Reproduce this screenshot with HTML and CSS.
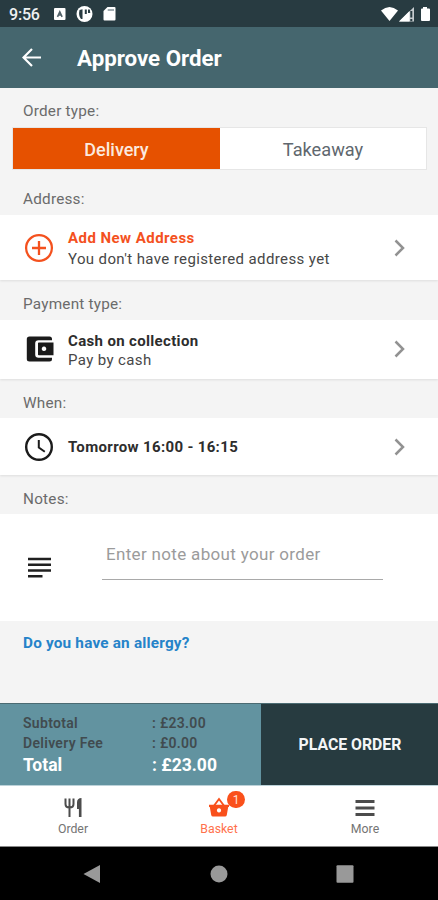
FILE: index.html
```html
<!DOCTYPE html>
<html lang="en">
<head>
<meta charset="utf-8">
<title>Approve Order</title>
<link rel="stylesheet" href="styles.css">
</head>
<body>
<div class="phone">
  <div class="status">
    <span class="clock">9:56</span>
    <svg class="status-left" width="64" height="16" viewBox="0 0 64 16">
      <rect x="0" y="2" width="11.500" height="12" rx="1" fill="#fff"/>
      <path d="M3.500 10.800l2.300-5 2.300 5M4.400 9h2.800" fill="none" stroke="#526269" stroke-width="1.600"/>
      <circle cx="30.500" cy="8" r="8" fill="#fff"/>
      <path d="M25.500 4l3-.8v9.800h-1.500q-2.800-3-1.500-9zM30.800 3.500h2v4.500h-2zM34 3.500h1.800l.5 3.500H34z" fill="#283b41"/>
      <path d="M53.500 1h7q1 0 1 1v11.500q0 1-1 1h-10q-1 0-1-1V5z" fill="#fff"/>
      <path d="M53.700 4H60" stroke="#8c999f" stroke-width="1.600"/>
    </svg>
    <svg class="status-right" width="50" height="16" viewBox="0 0 50 16">
      <path d="M0 4.500q8.500-7 17 0L8.500 15z" fill="#fff"/>
      <path d="M18 15.500L33 1v14.500z" fill="#c5cbce"/>
      <path d="M18 15.500L28.500 5v10.500z" fill="#fff"/>
      <path d="M30.300 5v6.500M30.300 13v2" stroke="#283b41" stroke-width="2"/>
      <path d="M42 1h4v1.500h2q1 0 1 1V14q0 1-1 1h-7q-1 0-1-1V3.500q0-1 1-1h1z" fill="#fff"/>
    </svg>
  </div>
  <header class="appbar">
    <svg width="20" height="20" viewBox="0 0 20 20"><path d="M10 1L1.500 9.500 10 18M1.500 9.500H19" fill="none" stroke="#fff" stroke-width="2.200"/></svg>
    <h1>Approve Order</h1>
  </header>
  <main>
    <div class="label label-type">Order type:</div>
    <div class="tabs">
      <div class="tab active">Delivery</div>
      <div class="tab">Takeaway</div>
    </div>
    <div class="label label-address">Address:</div>
    <section class="card address">
      <svg class="icon" width="30" height="30" viewBox="0 0 30 30"><g fill="none" stroke="#f4511e" stroke-width="2.300"><circle cx="15" cy="15" r="12.900"/><path d="M15 8v14M8 15h14"/></g></svg>
      <div class="copy"><b class="orange">Add New Address</b><span>You don't have registered address yet</span></div>
      <svg class="chev" width="12" height="18" viewBox="0 0 12 18"><path d="M1.500 1.500L9 9l-7.500 7.500" fill="none" stroke="#929292" stroke-width="2.500"/></svg>
    </section>
    <div class="label label-pay">Payment type:</div>
    <section class="card pay">
      <svg class="icon" width="30" height="30" viewBox="0 0 30 30"><path d="M5.500 2.500h20q2.500 0 2.500 2.500v1.200H14.500q-3.300 0-3.300 3.300v11q0 3.300 3.300 3.300H28V25q0 2.500-2.500 2.500h-20q-2.700 0-2.700-2.500V5q0-2.500 2.700-2.500z" fill="#1b1b1b"/><path fill-rule="evenodd" d="M14.800 8.500h14.700v12.800H14.800q-.8 0-.8-.8V9.300q0-.8.800-.8zM20 12.500a2.300 2.300 0 1 0 .01 0z" fill="#1b1b1b"/></svg>
      <div class="copy"><b>Cash on collection</b><span>Pay by cash</span></div>
      <svg class="chev" width="12" height="18" viewBox="0 0 12 18"><path d="M1.500 1.500L9 9l-7.500 7.500" fill="none" stroke="#929292" stroke-width="2.500"/></svg>
    </section>
    <div class="label label-when">When:</div>
    <section class="card when">
      <svg class="icon" width="30" height="30" viewBox="0 0 30 30"><circle cx="15" cy="15" r="12.800" fill="none" stroke="#1b1b1b" stroke-width="2.400"/><path d="M14.800 8v7.600l6 4.200" fill="none" stroke="#1b1b1b" stroke-width="2"/></svg>
      <div class="copy"><b>Tomorrow 16:00 - 16:15</b></div>
      <svg class="chev" width="12" height="18" viewBox="0 0 12 18"><path d="M1.500 1.500L9 9l-7.500 7.500" fill="none" stroke="#929292" stroke-width="2.500"/></svg>
    </section>
    <div class="label label-notes">Notes:</div>
    <section class="card notes">
      <svg class="note-icon" width="23" height="22" viewBox="0 0 23 22"><path d="M0 2h23M0 7.800h23M0 13.500h23M0 19.300h14.500" stroke="#202020" stroke-width="2.500"/></svg>
      <div class="field">Enter note about your order</div>
    </section>
    <div class="allergy">Do you have an allergy?</div>
  </main>
  <div class="checkout">
    <div class="totals">
      <span>Subtotal</span><span>: £23.00</span>
      <span>Delivery Fee</span><span>: £0.00</span>
      <span class="total">Total</span><span class="total">: £23.00</span>
    </div>
    <div class="place">PLACE ORDER</div>
  </div>
  <nav class="nav">
    <div class="item"><svg width="24" height="22" viewBox="0 0 24 22"><path d="M4.500 1.500V7q0 3.500 4 3.500t4-3.500V1.500M8.500 1.500v18.500" fill="none" stroke="#4c4c4c" stroke-width="2"/><path d="M20.500 1v19h-2.600v-8H16V5.500Q16 1 20.500 1z" fill="#4c4c4c"/></svg><span>Order</span></div>
    <div class="item on"><div class="basket"><svg width="24" height="22" viewBox="0 0 24 22"><path d="M6.800 9L12 2l5.200 7" fill="none" stroke="#f9501b" stroke-width="1.900"/><path fill-rule="evenodd" d="M2 7.800h20V10h-.8L19.800 18q-.3 1.500-1.800 1.500H6q-1.500 0-1.800-1.500L2.800 10H2zM12 11.300a2.100 2.100 0 1 0 .01 0z" fill="#f9501b"/></svg><i class="badge">1</i></div><span>Basket</span></div>
    <div class="item"><svg width="24" height="22" viewBox="0 0 24 22"><path d="M2.500 4.500h19M2.500 11h19M2.500 17.500h19" stroke="#4c4c4c" stroke-width="2.800"/></svg><span>More</span></div>
  </nav>
  <div class="system">
    <svg width="18" height="20" viewBox="0 0 18 20"><path d="M17 1v18L.5 10z" fill="#999"/></svg>
    <svg width="18" height="20" viewBox="0 0 18 20"><circle cx="9" cy="10" r="8.500" fill="#999"/></svg>
    <svg width="18" height="20" viewBox="0 0 18 20"><rect x=".5" y="1.300" width="17" height="17.400" rx="1" fill="#999"/></svg>
  </div>
</div>
</body>
</html>
```

FILE: styles.css
```css
* { box-sizing: border-box; }
body { margin: 0; font-family: Roboto, "Liberation Sans", sans-serif; background: #f4f4f4; }
.phone { width: 438px; height: 900px; display: flex; flex-direction: column; overflow: hidden; white-space: nowrap; }
svg { display: block; flex: none; }
.status { height: 27px; flex: none; background: #283b41; display: flex; align-items: center; color: #eef1f2; font-size: 16px; letter-spacing: -.2px; padding: 1px 8px 0 9px; }
.clock { width: 45px; font-weight: 500; }
.status-right { margin-left: auto; margin-right: -1px; }
.appbar { height: 61px; flex: none; background: #45666e; display: flex; align-items: center; padding: 1px 0 0 22px; gap: 35px; color: #fff; }
h1 { margin: 0; font-size: 22.3px; line-height: 26px; font-weight: 700; }
main { height: 615px; flex: none; background: #f4f4f4; }
.label { font-size: 15.3px; line-height: 20px; letter-spacing: .22px; color: #6b6b6b; padding-left: 23px; }
.label-type { height: 39px; padding-top: 13px; }
.label-address { height: 45px; padding-top: 19px; }
.label-pay { height: 40px; padding-top: 14px; }
.label-when { height: 39px; padding-top: 14px; }
.label-notes { height: 39px; padding-top: 14px; }
.tabs { height: 43px; display: grid; grid-template-columns: 207px 206px; margin-left: 12px; border: 1px solid #e6e6e6; width: 415px; background: #fff; }
.tab { display: flex; align-items: center; justify-content: center; font-size: 18.2px; color: #60676e; padding-top: 2px; }
.tab.active { background: #e65100; color: #fbe9df; font-weight: 500; font-size: 18px; }
.card { background: #fff; display: flex; align-items: center; padding: 0 32px 0 24px; box-shadow: 0 1px 2px #dedede; clip-path: inset(0 0 -4px 0); }
.icon { margin-right: 14px; }
.copy { flex: 1; display: flex; flex-direction: column; font-size: 15px; line-height: 20px; letter-spacing: .38px; color: #474747; align-items: flex-start; }
.copy b { font-weight: 700; color: #2d2d2d; letter-spacing: .34px; }
.copy b.orange { color: #f4511e; letter-spacing: .45px; }
.address { height: 65px; }
.address .copy { line-height: 21px; padding-top: 3px; }
.pay { height: 59px; padding-bottom: 1px; }
.pay .copy { line-height: 19px; padding-top: 3px; }
.when { height: 57px; }
.when .copy { padding-top: 1px; }
.notes { height: 107px; padding: 0; align-items: flex-start; box-shadow: none; }
.note-icon { margin: 43px 0 0 28px; }
.field { margin: 26px 0 0 51px; width: 281px; height: 40px; padding: 3px 0 0 4px; border-bottom: 1px solid #a9a9a9; font-size: 17px; line-height: 22px; letter-spacing: .33px; color: #9b9b9b; }
.allergy { padding: 12px 0 0 23px; font-size: 15.3px; line-height: 20px; letter-spacing: .2px; font-weight: 700; color: #2583c9; }
.checkout { height: 82px; flex: none; display: flex; border-top: 1px solid #4b6b72; background: #6293a0; }
.totals { width: 261px; background: #6293a0; display: grid; grid-template-columns: 129px 1fr; grid-template-rows: 20px 20px 23px; padding: 9px 0 0 23px; font-size: 14px; line-height: 20px; letter-spacing: .3px; font-weight: 600; color: #414b4f; }
.totals .total { color: #fff; font-size: 17.5px; line-height: 24px; letter-spacing: 0; font-weight: 700; }
.place { flex: 1; background: #273b40; color: #f4f6f7; display: flex; align-items: center; justify-content: center; font-size: 15.8px; font-weight: 700; padding-bottom: 1px; padding-left: 1px; }
.nav { height: 62px; flex: none; background: #fff; display: grid; grid-template-columns: repeat(3, 146px); border-bottom: 1px solid #888; border-top: 1px solid #bcd2d9; }
.item { display: flex; flex-direction: column; align-items: center; padding-top: 11px; font-size: 12.3px; line-height: 16px; color: #747474; }
.item span { margin-top: 2px; }
.item.on { color: #ff714b; }
.basket { position: relative; }
.badge { position: absolute; left: 20px; top: -6px; width: 18px; height: 17px; border-radius: 9px; background: #fa501b; color: #ffe1d6; font-style: normal; font-size: 12px; line-height: 18px; text-align: center; }
.system { height: 53px; flex: none; background: #000; display: flex; align-items: center; justify-content: space-between; padding: 0 84px 0 83px; }
```
